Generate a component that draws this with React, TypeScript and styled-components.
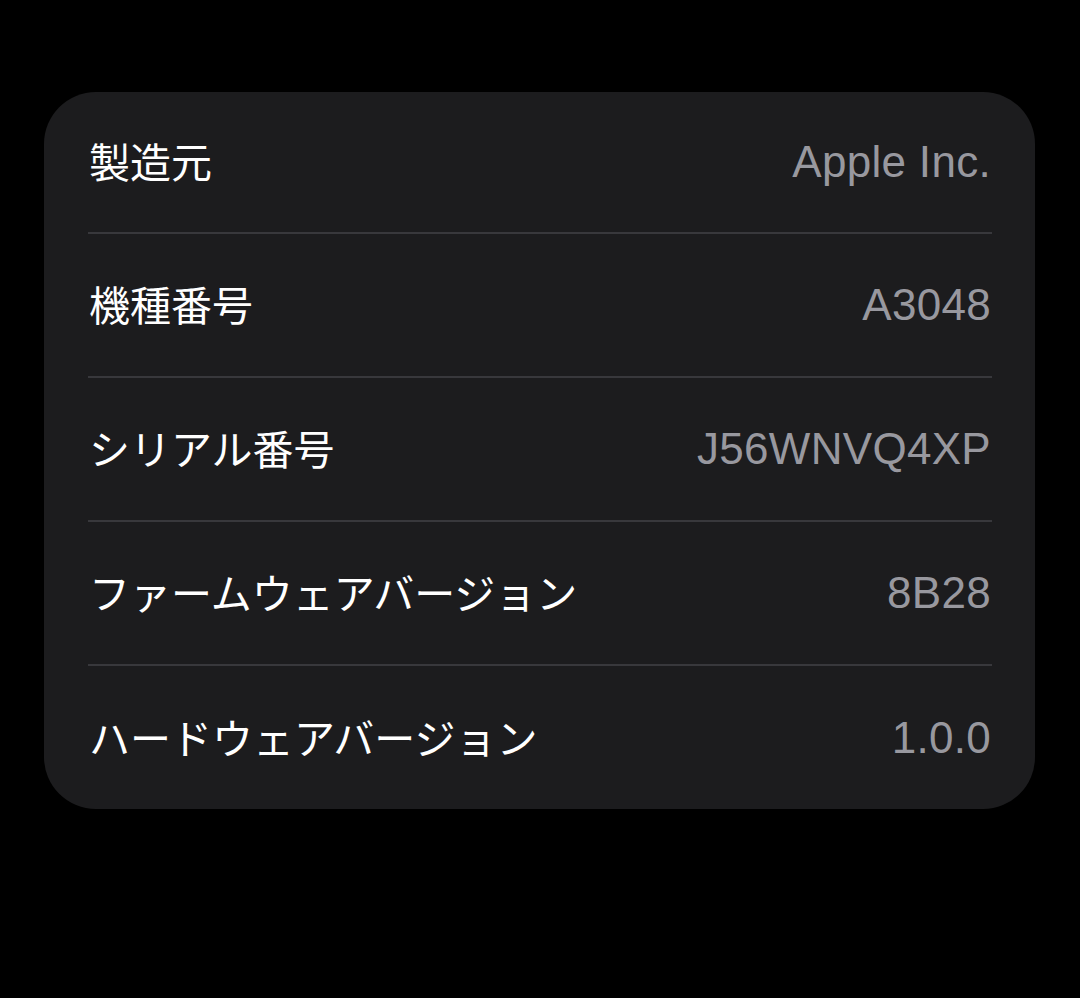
import styled, { createGlobalStyle } from "styled-components";

const GlobalStyle = createGlobalStyle`
  html, body {
    margin: 0;
    padding: 0;
    background: #000;
  }
  body {
    font-family: "Liberation Sans", "Noto Sans CJK JP", sans-serif;
    -webkit-font-smoothing: antialiased;
  }
`

const Page = styled.div`
  min-height: 998px;
  padding: 92px 45px 0 44px;
  box-sizing: border-box;
  background: #000;
`

const Card = styled.div`
  display: flex;
  flex-direction: column;
  background: #1c1c1e;
  border-radius: 52px;
  padding: 0 43px 0 44px;
`

const Row = styled.div`
  display: flex;
  align-items: center;
  justify-content: space-between;
  height: 142px;
  border-bottom: 2px solid #38383c;

  &:first-child {
    height: 140px;
  }

  &:last-child {
    height: 143px;
    border-bottom: none;
  }
`

const Label = styled.span`
  font-family: "Noto Sans CJK JP", sans-serif;
  font-size: 41px;
  color: #ffffff;
  padding: 0 0 4px 1px;
`

const Value = styled.span`
  font-family: "Liberation Sans", "Noto Sans CJK JP", sans-serif;
  font-size: 44px;
  color: #98989f;
  padding-right: 1px;
  letter-spacing: 0.3px;
`

const items = [
    { label: "製造元", value: "Apple Inc." },
    { label: "機種番号", value: "A3048" },
    { label: "シリアル番号", value: "J56WNVQ4XP" },
    { label: "ファームウェアバージョン", value: "8B28" },
    { label: "ハードウェアバージョン", value: "1.0.0" },
]

export default function App() {
    return (
        <>
            <GlobalStyle/>
            <Page>
                <Card>
                    {items.map((item) => (
                        <Row key={item.label}>
                            <Label>{item.label}</Label>
                            <Value>{item.value}</Value>
                        </Row>
                    ))}
                </Card>
            </Page>
        </>
    )
}
